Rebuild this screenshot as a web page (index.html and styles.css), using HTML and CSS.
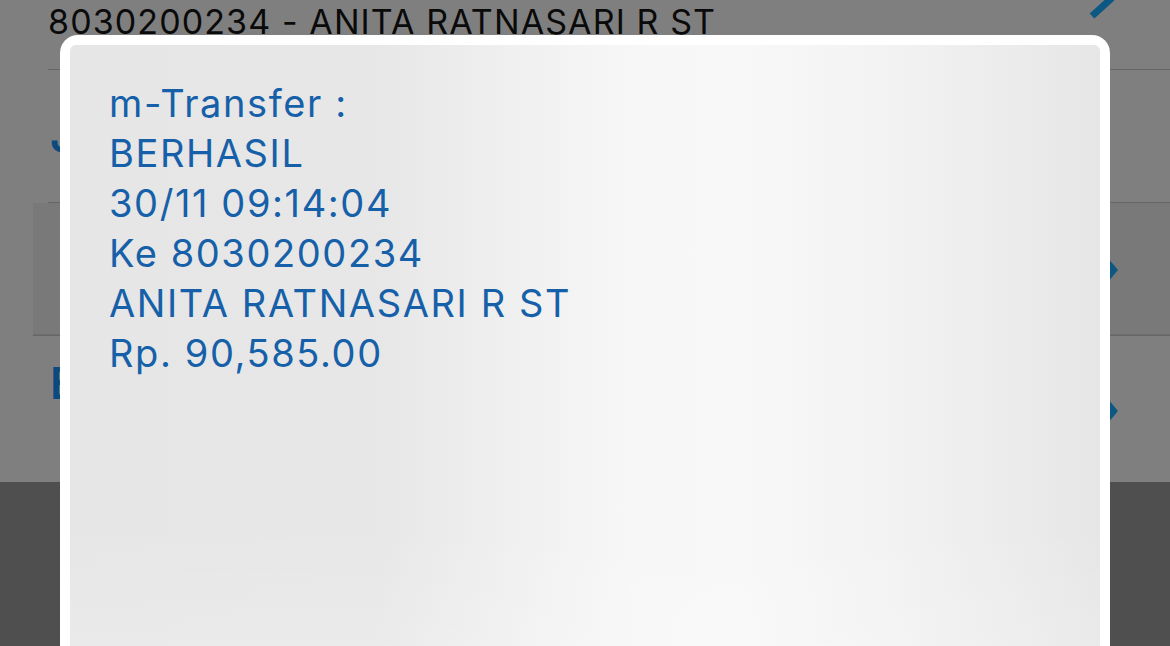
FILE: index.html
```html
<!DOCTYPE html>
<html lang="id">
<head>
<meta charset="utf-8">
<link rel="stylesheet" href="styles.css">
</head>
<body>
<div class="screen">
  <div class="title-row">
    <span class="title-text">8030200234 - ANITA RATNASARI R ST</span>
    <svg class="pencil" width="40" height="20" viewBox="0 0 40 20"><line x1="6" y1="16" x2="26" y2="-2" stroke="#0c5883" stroke-width="7"/></svg>
  </div>
  <div class="row">
    <span class="row-label">J</span>
  </div>
  <div class="row row-hl">
    <span class="row-label"></span>
    <svg class="chev" width="20" height="24" viewBox="0 0 20 24"><polygon points="0,0 4,0 14,12 4,24 0,24" fill="#0c5883"/></svg>
  </div>
  <div class="row row-last">
    <span class="row-label">E</span>
    <svg class="chev" width="20" height="24" viewBox="0 0 20 24"><polygon points="0,0 4,0 14,12 4,24 0,24" fill="#0c5883"/></svg>
  </div>
  <div class="footer"></div>
</div>

<div class="overlay">
  <div class="modal">
    <div class="panel">
      <p class="msg">m-Transfer :</p>
      <p class="msg">BERHASIL</p>
      <p class="msg">30/11 09:14:04</p>
      <p class="msg">Ke 8030200234</p>
      <p class="msg">ANITA RATNASARI R ST</p>
      <p class="msg">Rp. 90,585.00</p>
    </div>
  </div>
</div>
</body>
</html>
```

FILE: styles.css
```css
html, body {
  margin: 0;
  padding: 0;
  width: 1170px;
  height: 646px;
  overflow: hidden;
  background: #7f7f7f;
  font-family: Inter, "Liberation Sans", sans-serif;
}

.screen {
  display: flex;
  flex-direction: column;
  height: 646px;
  position: relative;
}

.title-row {
  height: 70px;
  margin-left: 48px;
  border-bottom: 1.5px solid #666666;
  box-sizing: border-box;
  display: flex;
  justify-content: space-between;
  align-items: flex-start;
}

.title-text {
  font-size: 34px;
  line-height: 44px;
  color: #0a0a0a;
  margin-top: 0;
  letter-spacing: 1.1px;
}

.pencil {
  margin-right: 44px;
  margin-top: 0;
}

.row {
  height: 133px;
  margin-left: 48px;
  border-bottom: 1.5px solid #666666;
  box-sizing: border-box;
  display: flex;
  align-items: center;
  justify-content: space-between;
}

.row-hl {
  margin-left: 33px;
  padding-left: 15px;
  background: #797979;
  border-bottom: none;
  box-shadow: inset 0 -1.5px 0 #666666;
}

.row-last {
  height: 146px;
  border-bottom: none;
  align-items: flex-start;
}

.row-last .row-label {
  margin-top: 20px;
}

.row-last .chev {
  margin-top: 63px;
}

.row-label {
  font-size: 44px;
  font-weight: 600;
  color: #0b4a7e;
  margin-left: 2px;
}

.chev {
  margin-right: 46px;
}

.footer {
  flex: 1;
  background: #4f4f4f;
}

.overlay {
  position: absolute;
  left: 60px;
  top: 35px;
  bottom: 0;
  overflow: hidden;
}

.modal {
  width: 1050px;
  height: 700px;
  box-sizing: border-box;
  background: #ffffff;
  border-radius: 18px;
  padding: 10px;
}

.panel {
  height: 100%;
  box-sizing: border-box;
  border-radius: 6px;
  padding: 33px 39px;
  background:
    linear-gradient(180deg, rgba(255,255,255,0) 70%, rgba(255,255,255,0.25) 100%),
    linear-gradient(90deg, #e6e6e6 0%, #e7e7e7 30%, #f1f1f1 45%, #f7f7f7 55%, #f8f8f8 65%, #f2f2f2 80%, #ebebeb 92%, #e6e6e6 100%);
}

.msg {
  margin: 0;
  font-size: 38px;
  line-height: 50px;
  letter-spacing: 1.6px;
  color: #1560a8;
}
```
